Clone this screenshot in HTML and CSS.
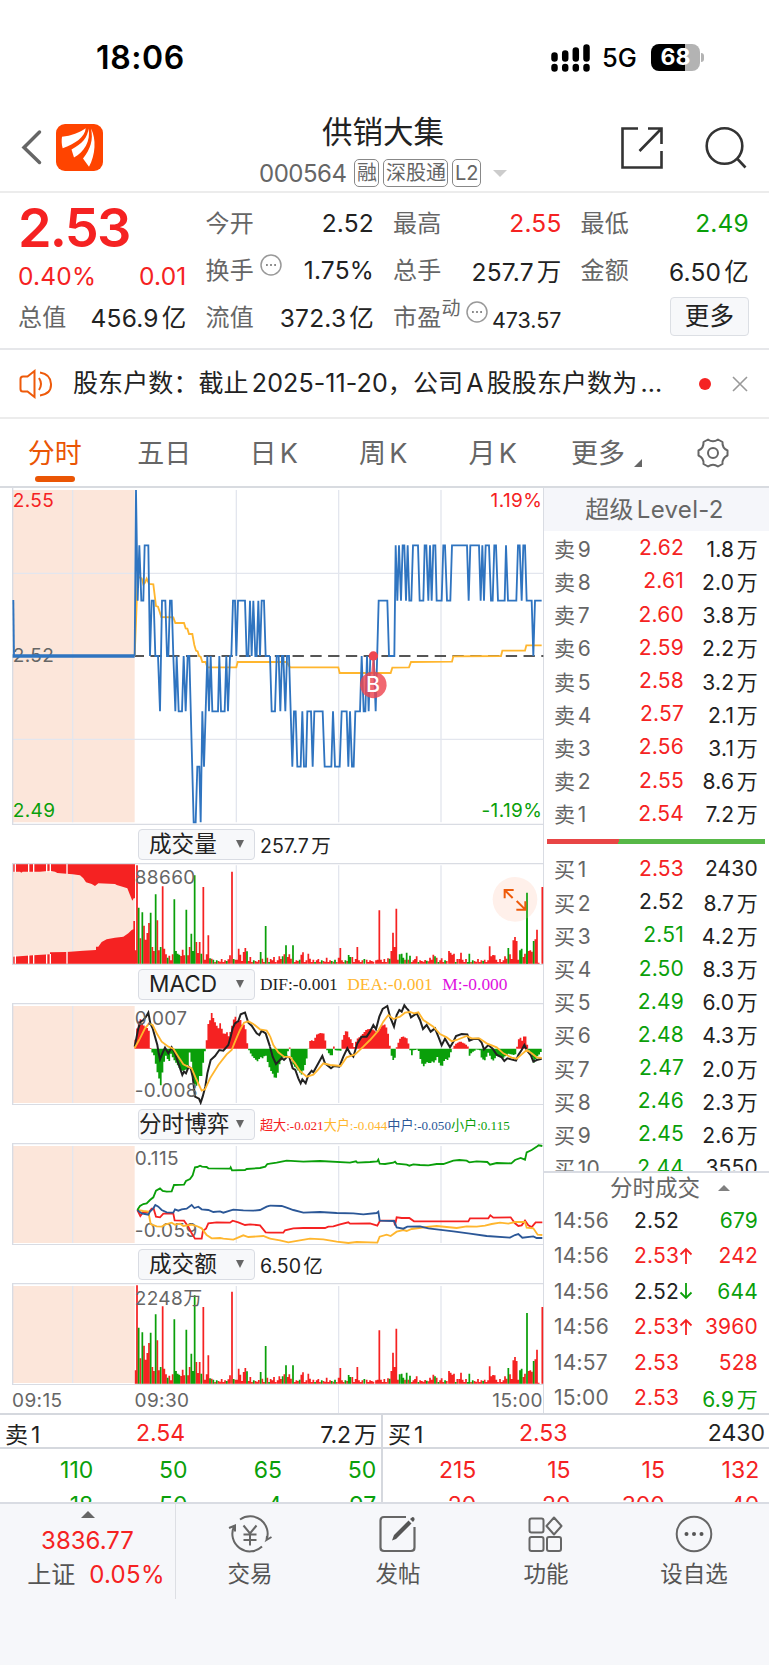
FILE: index.html
```html
<!DOCTYPE html>
<html lang="zh-cn">
<head>
<title>供销大集 000564</title>
<meta charset="utf-8">
<link rel="stylesheet" href="styles.css">
<script src="chart.js" defer></script>
</head>
<body>
<div class="status">
    <span class="time">18:06</span>
    <svg class="signal" width="40" height="28" viewBox="0 0 40 28">
        <path d="M3.5 11.500v3M14.200 9.500v5M24.800 6.500v8M35.500 3.500v11" stroke="#000" stroke-width="6.500" stroke-linecap="round"/>
        <path d="M3.500 23v1.500M14.200 23v1.500M24.800 23v1.500M35.500 23v1.500" stroke="#000" stroke-width="6.500" stroke-linecap="round"/>
    </svg>
    <span class="net">5G</span>
    <span class="battery">68</span><i class="nub"></i>
</div>

<div class="nav">
    <svg class="back" width="22" height="38" viewBox="0 0 22 38"><path d="M18.500 3L3 18.500l15.500 15" fill="none" stroke="#666" stroke-width="3.500" stroke-linecap="round"/></svg>
    <svg class="logo" width="47" height="47" viewBox="0 0 47 47">
        <rect width="47" height="47" rx="9" fill="#ff4400"/>
        <path d="M6 12.700C15 12 24 8.500 29.700 4.300C29 13 19 20 6.700 24.300C5.500 20 5.500 16 6 12.700z" fill="#fff"/>
        <path d="M32.500 4.500C32 13 26 20 15.500 25.500L18 33.500C28 28 35 17 32.500 4.500z" fill="#fff"/>
        <path d="M35 4.500C37.500 16 34.500 25 27 34.500L33 42.700C39.500 31 40.500 15 35 4.500z" fill="#fff"/>
    </svg>
    <div class="title">
        <h1>供销大集</h1>
        <p><span class="code">000564</span><b>融</b><b>深股通</b><b>L2</b><i class="down"></i></p>
    </div>
    <svg class="share" width="44" height="44" viewBox="0 0 44 44" fill="none" stroke="#333" stroke-width="2.600"><path d="M18 2.500H2.500v39h39V25M28 2.500h13.500V18M41 3L19.500 25"/></svg>
    <svg class="search" width="44" height="44" viewBox="0 0 44 44" fill="none" stroke="#333" stroke-width="2.600"><circle cx="20.500" cy="20" r="17.800"/><path d="M33 32.500l8.500 9"/></svg>
</div>

<div class="quote">
    <div class="col first">
        <strong>2.53</strong>
        <p class="chg red"><span>0.40%</span><span>0.01</span></p>
        <p><label>总值</label><span>456.9亿</span></p>
    </div>
    <div class="col">
        <p><label>今开</label><span>2.52</span></p>
        <p><label>换手<svg class="dots" width="22" height="22" viewBox="0 0 22 22"><circle cx="11" cy="11" r="10" fill="none" stroke="#999" stroke-width="1.500"/><path d="M6 11h1.800M10.100 11h1.800M14.200 11h1.800" stroke="#888" stroke-width="2"/></svg></label><span>1.75%</span></p>
        <p><label>流值</label><span>372.3亿</span></p>
    </div>
    <div class="col">
        <p><label>最高</label><span class="red">2.55</span></p>
        <p><label>总手</label><span>257.7万</span></p>
        <p class="pe"><label>市盈<sup>动</sup><svg class="dots" width="22" height="22" viewBox="0 0 22 22"><circle cx="11" cy="11" r="10" fill="none" stroke="#999" stroke-width="1.500"/><path d="M6 11h1.800M10.100 11h1.800M14.200 11h1.800" stroke="#888" stroke-width="2"/></svg></label><span>473.57</span></p>
    </div>
    <div class="col">
        <p><label>最低</label><span class="green">2.49</span></p>
        <p><label>金额</label><span>6.50亿</span></p>
        <p><a class="more">更多</a></p>
    </div>
</div>

<div class="news">
    <svg width="34" height="30" viewBox="0 0 34 30" fill="none" stroke="#ee5a0a" stroke-width="2"><path d="M15.500 2L8.500 7.500H4q-2.500 0-2.500 2.500v10q0 2.500 2.500 2.500h4.500l7 5.500zM20 9q4 6 0 12M21 3.500Q31.500 5 32 15T21 26.500"/></svg>
    <span class="txt">股东户数：截止2025-11-20，公司A股股东户数为...</span>
    <i class="dot"></i>
    <svg width="16" height="16" viewBox="0 0 16 16"><path d="M1 1l14 14M15 1L1 15" stroke="#999" stroke-width="1.600"/></svg>
</div>

<div class="tabs">
    <span class="on">分时</span><span>五日</span><span>日K</span><span>周K</span><span>月K</span><span class="drop">更多</span>
    <svg width="34" height="32" viewBox="0 0 34 32" fill="none" stroke="#666" stroke-width="2"><path d="M12 2.500Q17 6 22 2.500L26.500 5Q26 11 31.500 13.500V18.500Q26 21 26.500 27L22 29.500Q17 26 12 29.500L7.500 27Q8 21 2.500 18.500V13.500Q8 11 7.500 5z" stroke-linejoin="round"/><circle cx="17" cy="16" r="5"/></svg>
</div>

<div class="main">
    <div class="charts">
        <!-- price, 3 units per pixel -->
        <svg class="price" width="544" height="337" viewBox="0 24 1632 1011">
            <rect x="38" y="30" width="366" height="997" fill="#fce6da"/>
            <path class="grid" d="M218 30v997M709 30v997M1016 30v997M1323 30v997M38 280h1592M38 778h1592"/>
            <path class="frame" d="M38 24v1009h1592"/>
            <path d="M404 528h1226" stroke="#555" stroke-width="6" stroke-dasharray="34 19.300" stroke-dashoffset="6"/>
            <text class="mute" x="38" y="547">2.52</text>
            <g class="avg">
                <path d="M404 528L409 400 413 290 425 295 430 313 435 308 440 296 447 312 460 313 468 378 474 380 484 411 520 412 526 429 552 429 557 445 562 446 567 462 577 462 583 495 588 512 593 514 597 528 602 530 607 546 617 546 622 562 709 562 713 546H860L870 562H1015L1019 579H1172L1177 563 1227 562 1233 546 1356 545 1360 529 1503 528 1507 512H1575L1579 496H1625"/>
            </g>
            <g class="now">
                <path d="M40 360L42 528"/><path d="M38 528H404" stroke-width="10"/>
                <path d="M404 528L408 30 413 362 418 196 424 362 430 362 434 196 445 196 450 528 455 362 461 362 466 528 474 528 480 694 486 362 496 362 501 528 505 528 510 362 515 362 520 528 526 694 530 528 536 694 546 694 551 528 557 694 563 528 568 528 581 1027 587 1027 592 860 598 860 602 1027 607 694 612 860 622 528 627 694 632 528 637 694 654 694 658 528 663 694 674 694 679 528 684 694 690 528 694 528 699 362 705 362 709 528 714 362 735 362 740 528 745 528 750 362 755 528 760 362 766 528 770 528 775 362 780 528 785 362 792 362 797 528 810 528"/>
                <path transform="translate(810)" d="M0 528L5 694 15 694 20 528 26 528 31 694 36 528 40 528 46 694 51 528 57 528 67 860 72 694 77 694 82 860 92 860 97 694 102 860 108 860 112 694 123 694 128 860 133 694 158 694 164 860 184 860 189 694 195 860 209 860 215 694 230 694 235 860 240 694 246 860 251 860 256 694 270 694 275 528 281 694 286 694 291 528 296 694 301 528 311 528 317 694 326 362 352 362 357 528 373 528 377 196 382 362 387 196 393 362 398 196 403 196 408 362 413 196 418 362 424 362 429 196 444 196 449 362 460 362 464 196 469 196 475 362 480 196 485 362 490 196 496 196 500 362 515 362 520 196 525 196 531 362 541 362 546 196 591 196 596 362 601 196 627 196 632 362 637 196 642 362 647 196 657 196 663 362 668 362 673 196 678 196 684 362 704 362 708 196 714 362 739 362 744 196 749 196 755 362 760 196 765 196 770 362 785 362 790 528 795 362 815 362"/>
            </g>
            <circle cx="1120" cy="528" r="14" fill="#ee4650"/>
            <path d="M1117 540h6l3 35a40 40 0 1 1-12 0z" fill="#ee4650" opacity=".82"/>
            <text class="mark" x="1120" y="635">B</text>
            <text class="up" x="38" y="81">2.55</text>
            <text class="dn" x="38" y="1012">2.49</text>
            <text class="up" x="1627" y="81" text-anchor="end">1.19%</text>
            <text class="dn" x="1627" y="1012" text-anchor="end">-1.19%</text>
        </svg>

        <div class="bar"><span class="sel">成交量</span><span class="val">257.7万</span></div>
        <svg class="sub" width="544" height="102" viewBox="0 129 1632 306">
            <rect x="38" y="133" width="366" height="299" fill="#fce6da"/>
            <path class="grid" d="M218 136v296M709 136v296M1016 136v296M1323 136v296"/>
            <path fill="#f52222" d="M38 131V155H60L64 158L68 155H120L150 152L165 155L172 159L218 163L240 166L250 175L258 187L275 192L285 198L295 190L345 192L350 195L370 201L382 205L390 225L397 242L401 235H405V131z"/>
            <path fill="#f52222" d="M38 431V410L100 406L150 403V397L200 396L250 392L288 390V380H295L305 366L320 358L345 353L370 350L385 340L395 330L400 328V303H405V431z"/>
            <path d="M46 131v26M86 131v26M101 131v26M140 131v26M151 131v26M201 131v31M46 431v-26M86 431v-26M101 431v-26M140 431v-28M151 431v-29M201 431v-36" stroke="#fff" stroke-width="4"/>
            <g id="vol"></g>
            <path class="frame" d="M38 131v304M36 130.500h1594M36 434h1594"/>
            <text class="mute" x="404" y="193">88660</text>
            <circle cx="1545" cy="238" r="67" fill="#fff0ea"/>
            <path d="M1581 431V218" stroke="#0a9f0a" stroke-width="5"/>
            <path d="M1514 235v-25h27M1514 210l24 24M1576 244v25h-27M1576 269l-26-26" fill="none" stroke="#ee5a0a" stroke-width="6"/>
        </svg>

        <div class="bar"><span class="sel">MACD</span><span class="serif">DIF:-0.001</span><span class="serif y">DEA:-0.001</span><span class="serif m">M:-0.000</span></div>
        <svg class="sub" width="544" height="102" viewBox="0 549 1632 306">
            <rect x="38" y="558" width="366" height="291" fill="#fce6da"/>
            <path class="grid" d="M218 558v291M709 558v291M1016 558v291M1323 558v291"/>
            <g id="macd"></g>
            <path class="frame" d="M38 550v304M36 550.500h1594M36 854h1594"/>
            <g fill="none" stroke="#222" stroke-width="6">
                <path d="M404 680L410 650 415 625 422 605 430 600 438 590 445 578 451 610 458 625 465 650 472 675 476 700 480 718 487 700 495 683 505 700 515 682 525 700 535 730 547 765 552 755 558 760 566 740 572 745 578 770 585 830 597 836 602 848 608 830 616 800 622 760 632 720 645 708 658 690 670 692 685 675 692 650 698 625 705 610 715 603 722 583 735 578 745 608 755 617 770 640 778 645 785 632 797 640 810 680"/>
                <path transform="translate(810)" d="M0 680L8 710 18 732 28 722 35 714 42 720 52 710 58 712 68 745 76 750 85 775 92 790 97 778 107 790 115 765 125 752 130 757 145 730 157 708 165 730 183 745 192 738 208 740 220 710 232 685 240 700 250 710 262 670 275 650 290 650 300 635 310 615 318 628 328 590 338 567 352 558 360 590 372 620 380 585 388 570 395 575 403 556 410 565 415 570 423 592 440 580 450 600 459 627 470 615 482 635 495 625 505 650 515 676 525 656 540 682 550 665 558 648 575 642 592 643 598 662 610 657 625 656 635 668 642 688 655 675 668 686 680 704 695 712 703 723 712 715 738 722 745 705 755 690 763 675 772 693 782 705 790 725 800 720 815 716"/>
            </g>
            <g class="avg">
                <path d="M404 684L420 655 435 625 447 611 458 615 470 640 485 665 505 680 520 686 535 710 550 733 575 745 590 780 605 812 615 808 630 775 655 735 680 703 695 690 705 665 720 630 732 608 745 604 760 612 780 628 800 632 810 648"/>
                <path transform="translate(810)" d="M0 648L10 675 25 697 42 710 60 711 75 730 90 753 110 770 130 764 145 748 160 730 180 735 212 738 230 712 255 703 280 680 300 660 325 632 340 605 355 585 370 597 390 590 405 578 420 576 432 580 445 577 460 600 490 620 510 642 530 652 545 664 560 660 590 648 605 655 628 655 650 670 680 682 700 700 725 713 740 716 755 703 770 690 785 700 800 712 815 714"/>
            </g>
            <text class="mute" x="404" y="614">0.007</text>
            <text class="mute" x="404" y="830">-0.008</text>
        </svg>

        <div class="bar"><span class="sel wide">分时博弈</span><span class="serif s"><i class="red">超大:-0.021</i><i class="y">大户:-0.044</i><i class="b">中户:-0.050</i><i class="green">小户:0.115</i></span></div>
        <svg class="sub" width="544" height="102" viewBox="0 129 1632 306">
            <rect x="38" y="138" width="366" height="291" fill="#fce6da"/>
            <path class="grid" d="M218 138v291M709 138v291M1016 138v291M1323 138v291"/>
            <path class="frame" d="M38 131v304M36 130.500h1594M36 434h1594"/>
            <text class="mute" x="404" y="194">0.115</text>
            <text class="mute" x="404" y="410">-0.059</text>
            <g class="game" stroke="#f52222">
                <path d="M412 330L421 348 430 336 446 338 455 326 461 326 468 350 480 352 490 341 520 341 524 361 552 362 565 380 575 400 585 416 605 416 609 392 618 386 625 370 650 367 690 368 698 362 715 367 735 375 750 373 780 376 797 397 810 398"/>
                <path transform="translate(810)" d="M0 398L40 398 45 391 70 385 100 384 165 384 175 380 190 379 210 373 235 367 240 371 300 370 322 377 330 362 372 362 375 376 380 352 395 354 418 354 432 364 595 364 600 355 655 355 661 346 670 353 722 352 735 370 745 378 755 376 765 362 775 376 785 381 797 367 817 367"/>
            </g>
            <g class="game" stroke="#ffb62e">
                <path d="M412 330L430 333 445 335 452 372 470 379 485 380 500 372 515 368 525 374 540 371 550 378 575 374 590 378 605 385 620 405 635 415 660 414 670 416 700 419 730 406 745 411 790 408 810 416"/>
                <path transform="translate(810)" d="M0 416L30 421 55 427 85 422 120 416 160 418 200 425 235 429 260 426 322 428 329 410 350 404 362 408 380 395 400 390 410 393 425 387 470 381 500 378 560 384 590 379 620 380 645 377 665 372 690 368 715 371 735 366 765 366 770 383 790 385 803 404 817 405"/>
            </g>
            <g class="game" stroke="#2b5797">
                <path d="M412 330L418 335 425 340 435 342 445 344 450 335 460 325 466 315 475 320 485 330 500 337 520 338 525 328 535 332 545 328 560 326 575 315 583 324 595 320 605 328 625 330 640 336 660 334 670 338 690 332 700 329 730 331 760 332 780 330 800 320 810 317"/>
                <path transform="translate(810)" d="M0 317L35 318 50 323 70 330 100 338 150 336 200 339 250 340 280 343 320 339 325 335 329 362 372 363 380 382 400 386 412 380 450 379 475 385 500 388 550 394 600 401 650 408 720 413 735 405 745 402 757 413 790 409 800 414 817 414"/>
            </g>
            <g class="game" stroke="#0a9f0a">
                <path d="M412 330L420 318 430 312 440 310 450 300 460 292 468 272 480 265 488 273 500 275 515 274 522 255 552 254 558 243 570 237 578 226 585 202 592 201 600 197 606 200 620 201 625 205 690 206 692 202 696 211 735 210 740 207 780 204 796 200 802 192 810 191"/>
                <path transform="translate(810)" d="M0 191L20 188 50 182 100 185 150 183 240 188 258 184 262 188 300 186 322 184 325 179 329 191 345 192 370 188 375 185 380 191 410 194 418 197 430 193 450 195 475 196 500 192 520 192 550 182 568 180 590 182 598 187 620 184 652 186 660 194 680 189 724 190 735 180 752 174 765 179 770 157 785 150 802 139 806 136 817 138"/>
            </g>
        </svg>

        <div class="bar"><span class="sel">成交额</span><span class="val">6.50亿</span></div>
        <svg class="sub" width="544" height="102" viewBox="0 129 1632 306">
            <rect x="38" y="138" width="366" height="291" fill="#fce6da"/>
            <path class="grid" d="M218 138v291M709 138v291M1016 138v291M1323 138v291"/>
            <use href="#vol"/>
            <path class="frame" d="M38 131v304M36 130.500h1594M36 434h1594"/>
            <text class="mute" x="404" y="194">2248万</text>
        </svg>
        <div class="axis"><span>09:15</span><span>09:30</span><span>15:00</span></div>
    </div>

    <div class="side">
        <h2>超级Level-2</h2>
        <ul class="book">
            <li><label>卖9</label><b class="red">2.62</b><em>1.8万</em></li>
            <li><label>卖8</label><b class="red">2.61</b><em>2.0万</em></li>
            <li><label>卖7</label><b class="red">2.60</b><em>3.8万</em></li>
            <li><label>卖6</label><b class="red">2.59</b><em>2.2万</em></li>
            <li><label>卖5</label><b class="red">2.58</b><em>3.2万</em></li>
            <li><label>卖4</label><b class="red">2.57</b><em>2.1万</em></li>
            <li><label>卖3</label><b class="red">2.56</b><em>3.1万</em></li>
            <li><label>卖2</label><b class="red">2.55</b><em>8.6万</em></li>
            <li><label>卖1</label><b class="red">2.54</b><em>7.2万</em></li>
        </ul>
        <div class="ratio"></div>
        <ul class="book buy">
            <li><label>买1</label><b class="red">2.53</b><em>2430</em></li>
            <li><label>买2</label><b>2.52</b><em>8.7万</em></li>
            <li><label>买3</label><b class="green">2.51</b><em>4.2万</em></li>
            <li><label>买4</label><b class="green">2.50</b><em>8.3万</em></li>
            <li><label>买5</label><b class="green">2.49</b><em>6.0万</em></li>
            <li><label>买6</label><b class="green">2.48</b><em>4.3万</em></li>
            <li><label>买7</label><b class="green">2.47</b><em>2.0万</em></li>
            <li><label>买8</label><b class="green">2.46</b><em>2.3万</em></li>
            <li><label>买9</label><b class="green">2.45</b><em>2.6万</em></li>
            <li><label>买10</label><b class="green">2.44</b><em>3550</em></li>
        </ul>
        <h3>分时成交<i></i></h3>
        <ul class="deal">
            <li><label>14:56</label><b>2.52</b><em class="green">679</em></li>
            <li><label>14:56</label><b class="red">2.53<svg width="14" height="18" viewBox="0 0 14 18"><path d="M7 17V2M1.500 7.500L7 2l5.500 5.500"/></svg></b><em class="red">242</em></li>
            <li><label>14:56</label><b>2.52<svg class="green" width="14" height="18" viewBox="0 0 14 18"><path d="M7 1v15M1.500 10.500L7 16l5.500-5.500"/></svg></b><em class="green">644</em></li>
            <li><label>14:56</label><b class="red">2.53<svg width="14" height="18" viewBox="0 0 14 18"><path d="M7 17V2M1.500 7.500L7 2l5.500 5.500"/></svg></b><em class="red">3960</em></li>
            <li><label>14:57</label><b class="red">2.53</b><em class="red">528</em></li>
            <li><label>15:00</label><b class="red">2.53</b><em class="green">6.9万</em></li>
        </ul>
    </div>
</div>

<div class="queue">
    <div class="half">
        <p class="top"><label>卖1</label><b class="red">2.54</b><em>7.2万</em></p>
        <div class="nums green"><span>110</span><span>50</span><span>65</span><span>50</span><span>18</span><span>50</span><span>4</span><span>97</span></div>
    </div>
    <div class="half">
        <p class="top"><label>买1</label><b class="red">2.53</b><em>2430</em></p>
        <div class="nums red"><span>215</span><span>15</span><span>15</span><span>132</span><span>20</span><span>20</span><span>300</span><span>40</span></div>
    </div>
</div>

<div class="foot">
    <div class="index"><i></i><p class="red">3836.77</p><p>上证<span class="red">0.05%</span></p></div>
    <div class="item">
        <svg width="44" height="40" viewBox="0 0 44 40" fill="none" stroke="#666" stroke-width="2"><path d="M12 5.500A17.500 17.500 0 0 1 38.500 26l5-3M38.500 26l.5-4M34 32.500A17.500 17.500 0 0 1 6 12.500M1 14l6-2.500v6M15.500 11.500l6.500 8 6.500-8M22 19.500v12M15.500 20.500h13M15.500 26h13"/></svg>交易
    </div>
    <div class="item">
        <svg width="44" height="40" viewBox="0 0 44 40"><path d="M30 3H8q-3.500 0-3.500 3.500v27Q4.500 37 8 37h27q3.500 0 3.500-3.500V13" fill="none" stroke="#666" stroke-width="2.200"/><path d="M16 26.500l2-5.500L32.500 6.500l3 3L20 25zM34 5l2.500-2q2.500 0 2 3L37 8z" fill="#555"/></svg>发帖
    </div>
    <div class="item">
        <svg width="44" height="40" viewBox="0 0 44 40" fill="none" stroke="#666" stroke-width="2"><rect x="5.500" y="4.500" width="14" height="14" rx="2"/><rect x="5.500" y="23" width="14" height="14" rx="2"/><rect x="23" y="23" width="14" height="14" rx="2"/><path d="M30 3.500l7.500 8.500-7.500 8.500-7.500-8.500z" stroke-linejoin="round"/></svg>功能
    </div>
    <div class="item">
        <svg width="44" height="40" viewBox="0 0 44 40"><circle cx="22" cy="20" r="17.300" fill="none" stroke="#666" stroke-width="2"/><g fill="#555"><circle cx="14.500" cy="20" r="2"/><circle cx="22" cy="20" r="2"/><circle cx="29.500" cy="20" r="2"/></g></svg>设自选
    </div>
</div>
</body>
</html>
```
FILE: styles.css
```css
body,ul,h1,h2,h3,p{margin: 0;padding: 0;}
li{list-style: none;}
i,em{font-style: normal;}
h1,h2,h3,b{font-weight: 400;}
svg{display: block;flex: none;}
body{width: 769px;height: 1665px;overflow: hidden;background: #FFF;color: #222;font-family: Inter,"Noto Sans CJK SC",sans-serif;text-autospace: normal;}
.red{color: #f52222;}
.green{color: #0a9f0a;}
.y{color: #ffb62e;}
.b{color: #2b5797;}
.m{color: #e010e0;}

/* status bar */
.status{height: 115px;box-sizing: border-box;display: flex;align-items: center;padding-left: 96px;color: #000;}
.status .time{font-size: 32px;font-weight: 600;width: 455px;letter-spacing: .6px;}
.status .net{font-size: 25.500px;font-weight: 500;margin-left: 11px;width: 49px;}
.battery{width: 49px;height: 27px;border-radius: 8px;background: linear-gradient(90deg,#000 70%,#b3b3b3 70%);color: #FFF;font-size: 23px;font-weight: 700;line-height: 27px;text-align: center;}
.nub{width: 3px;height: 9px;margin-left: 1px;border-radius: 0 3px 3px 0;background: #b3b3b3;}

/* title bar */
.nav{height: 76px;border-bottom: 2px solid #ececec;display: flex;}
.nav .back{margin: 14px 0 0 21px;}
.nav .logo{margin: 9px 0 0 13px;}
.title{width: 517px;box-sizing: border-box;text-align: center;padding-left: 43px;}
.title h1{font-size: 30.5px;line-height: 34px;}
.title p{display: flex;justify-content: center;align-items: center;margin-top: 9px;height: 30px;color: #666;}
.title .code{font-size: 24px;margin-right: 4px;letter-spacing: -.5px;}
.title b{border: 1.5px solid #888;border-radius: 5px;font-size: 20px;line-height: 26px;padding: 0 1.500px;margin-left: 4px;}
.down{border: 7px solid transparent;border-top-color: #ccc;border-bottom: 0;margin-left: 12px;}
.nav .share{margin: 11px 0 0 0;}
.nav .search{margin: 11px 0 0 40px;}

/* quote */
.quote{display: flex;gap: 19px;padding: 7px 18px 0 18px;height: 148px;border-bottom: 2px solid #e6e7ea;font-size: 24.5px;}
.col{width: 168.500px;flex: none;}
.col p{display: flex;justify-content: space-between;align-items: center;height: 46.7px;white-space: nowrap;letter-spacing: .2px;}
.col label{color: #666;font-size: 24px;display: flex;margin-top: -3px;}
.first strong{display: block;font-size: 54px;font-weight: 600;line-height: 57px;height: 57px;margin-top: -1px;color: #f52222;letter-spacing: -1.800px;}
.first .chg{height: 36px;padding-top: 2px;margin-bottom: -.5px;}
.dots{margin: 3px 0 0 6px;}
.pe sup{font-size: 19px;line-height: 22px;}
.pe .dots{margin-left: 5px;}
.col .pe span{font-size: 21.500px;padding-top: 6px;letter-spacing: 0;}
.more{margin-left: auto;width: 77px;height: 37px;line-height: 36px;border: 1px solid #dcdfe4;border-radius: 4px;background: #f7f8fa;text-align: center;}

.news{height: 67px;border-bottom: 2px solid #ececec;display: flex;align-items: center;padding-left: 19px;}
.news .txt{margin-left: 20px;font-size: 25px;width: 626px;white-space: nowrap;letter-spacing: .1px;line-height: 34px;padding-bottom: 2px;}
.news .dot{width: 12px;height: 12px;border-radius: 50%;background: #f52222;margin-right: 21px;}

.tabs{height: 67px;border-bottom: 2px solid #d8dbe0;display: flex;align-items: center;font-size: 27px;color: #666;}
.tabs span{width: 109.500px;height: 67px;line-height: 69px;text-align: center;position: relative;}
.tabs .on{color: #ea5504;}
.tabs .on:after{content: "";position: absolute;left: 35px;bottom: 4px;width: 40px;height: 6px;border-radius: 3px;background: #ea5504;}
.tabs .drop{width: 101px;}
.tabs .drop:after{content: "";position: absolute;right: 7px;bottom: 19px;border-left: 8px solid transparent;border-bottom: 8px solid #666;}
.tabs svg{margin-left: 47px;}

/* charts */
.main{display: flex;height: 927px;box-sizing: border-box;border-bottom: 2px solid #d5d8de;}
.charts{width: 544px;flex: none;border-right: 1px solid #d9dce3;box-sizing: border-box;}
.charts text{font-size: 57px;letter-spacing: 1.200px;text-autospace: no-autospace;}
.charts .mark{font-size: 64px;font-weight: 500;fill: #FFF;text-anchor: middle;}
.mute{fill: #666;}
.up{fill: #f52222;}
.dn{fill: #0a9f0a;}
.grid{fill: none;stroke: #e3e6ee;stroke-width: 4;}
.frame{fill: none;stroke: #d9dce3;stroke-width: 4;}
.now{fill: none;stroke: #2f74c0;stroke-width: 5.500;}
.avg{fill: none;stroke: #ffb62e;stroke-width: 5.500;}
.game{fill: none;stroke-width: 5.500;}
.bar{height: 38px;display: flex;align-items: center;padding-left: 138px;white-space: nowrap;}
.sel{box-sizing: border-box;width: 117px;height: 31px;line-height: 28px;border: 1px solid #d9dce3;border-radius: 4px;background: #f7f8fa;font-size: 22.600px;padding-left: 10px;margin-right: 5px;position: relative;}
.sel:after{content: "";position: absolute;right: 10px;top: 10px;border: 4.500px solid transparent;border-top: 8px solid #666;border-bottom: 0;}
.sel.wide{padding-left: 0;}
.val{font-size: 19.500px;}
.serif{font-family: "Liberation Serif","Noto Sans CJK SC",serif;font-size: 17.400px;margin-right: 9.500px;}
.serif.s{font-size: 13.100px;text-autospace: no-autospace;}
.axis{height: 28px;line-height: 32px;display: flex;font-size: 19px;color: #666;padding-left: 12px;letter-spacing: .4px;background: linear-gradient(#e3e6ee,#e3e6ee) 338px 0/1px 100% no-repeat;}
.axis span:first-child{width: 122.500px;}
.axis span:last-child{margin-left: auto;}

/* order book */
.side{flex: 1;width: 225px;}
.side h2{height: 43.200px;line-height: 43px;background: #f5f6fa;color: #666;font-size: 24px;text-align: center;padding-right: 4px;letter-spacing: .3px;}
.side li{display: flex;align-items: center;height: 33.200px;padding: 0 11px 0 10px;font-size: 21px;letter-spacing: .2px;}
.side label{color: #666;width: 64px;}
.side b{width: 66px;text-align: right;}
.side em{flex: 1;text-align: right;}
.ratio{height: 5px;margin: 9.500px 4px 7.500px 3px;background: linear-gradient(115deg,#e84545 33%,#57b847 33%);}
.buy{height: 319px;overflow: hidden;border-bottom: 2px solid #d9dce3;}
.side h3{height: 30px;line-height: 32px;color: #666;font-size: 22.500px;display: flex;align-items: center;padding-left: 66px;}
.side h3 i{border: 6px solid transparent;border-bottom-color: #808080;border-top: 0;margin-left: 18px;}
.deal{height: 209px;}
.side .deal li{height: 35.400px;}
.deal label{width: 80px;}
.deal b{display: flex;align-items: center;text-align: left;}
.deal b svg{fill: none;stroke: currentColor;stroke-width: 1.800;}

/* queue */
.queue{display: flex;height: 87px;overflow: hidden;}
.half{width: 383px;flex: none;box-sizing: border-box;border-right: 2px solid #d5d8de;}
.half+.half{width: 386px;border: 0;}
.top{display: flex;align-items: center;height: 34px;border-bottom: 2px solid #d5d8de;font-size: 23px;padding: 4px 4px 0 5px;box-sizing: border-box;}
.top label{width: 110px;}
.top b{flex: 1;padding-left: 21px;}
.nums{display: grid;grid-template-columns: 94.300px 94.300px 94.300px 94.300px;font-size: 23px;padding: 3px 0 0;}
.nums span{text-align: right;line-height: 36px;height: 35px;padding-right: 1px;}

.foot{height: 164px;border-top: 2px solid #d9dce3;background: #f6f7fa;display: flex;color: #555;box-sizing: border-box;}
.index{width: 175px;height: 95px;border-right: 1px solid #dddfe4;text-align: center;font-size: 24px;display: flex;flex-direction: column;align-items: center;}
.index i{border: 7px solid transparent;border-bottom-color: #666;border-top: 0;margin-top: 7px;}
.index p{line-height: 34px;margin-top: 6px;white-space: nowrap;}
.index p:last-child{margin-top: 0;padding-left: 17px;}
.index span{margin-left: 11px;letter-spacing: .3px;}
.item{width: 148px;display: flex;flex-direction: column;align-items: center;font-size: 22.500px;line-height: 34px;padding-top: 10px;gap: 3px;}
```
FILE: chart.js
```js
// x position of a minute and its height, minus = green
var vol = [407,40,411,295,416,-168,421,76,427,-154,432,114,437,72,442,92,447,122,452,-153,457,50,462,38,467,-208,472,130,477,40,482,-50,488,232,493,45,498,28,503,-18,508,24,513,10,518,28,523,-193,528,-38,533,-30,538,-27,543,23,548,42,553,25,559,-162,564,25,569,50,574,-90,579,-38,584,-265,589,65,594,32,599,65,604,-30,610,230,615,12,620,28,625,85,630,-16,635,15,640,-12,665,14,685,13,690,25,696,276,701,-14,706,12,711,12,716,45,721,27,726,8,731,35,736,47,741,-37,746,8,751,20,782,-35,787,15,797,-113,802,18,812,14,817,10,822,20,
    833,10,838,22,843,14,848,-22,853,28,858,-55,863,20,868,28,873,15,879,-55,894,8,899,-12,904,27,909,34,925,30,930,15,940,12,955,14,980,18,1005,-12,1016,18,1021,47,1026,10,1046,-26,1051,-20,1057,20,1067,14,1072,50,1077,10,1093,-14,1100,12,1128,10,1133,12,1138,160,1143,12,1153,14,1164,16,1169,-15,1174,38,1179,93,1184,50,1189,165,1194,12,1199,-28,1205,-30,1210,-18,1215,12,1220,-33,1225,12,1230,-24,1245,14,1250,22,1290,18,1295,12,1300,27,1305,-22,1310,18,1325,16,1347,38,1352,33,1357,27,1362,30,1372,14,1378,14,1383,33,1388,12,1398,14,1408,-30,1434,14,1454,12,1469,52,1474,22,1479,26,1484,25,1489,12,1500,14,1515,22,1520,15,1525,-47,1530,28,1535,14,1540,70,1545,80,1550,68,1555,12,1560,-40,1565,-45,1570,20,1575,30,1581,-212,1586,38,1591,40,1596,36,1601,-68,1606,73,1611,102,1616,3,1621,0,1627,230];

// macd key heights, minutes between are filled in
var macd = [404,0,407,40,414,75,420,92,426,75,436,65,445,60,449,45,452,-1,456,-10,462,-20,467,-45,472,-70,477,-88,482,-112,487,-75,490,-50,497,-20,502,-30,508,-37,513,-15,520,-30,530,-45,545,-68,560,-62,565,-45,568,-8,573,-28,578,-85,585,-110,592,-112,600,-80,605,-82,611,-30,614,-10,617,0,620,27,625,75,630,85,634,110,640,92,647,75,655,60,660,78,667,55,673,40,680,52,685,35,692,52,700,85,706,97,712,75,720,90,728,68,735,75,740,30,744,2,747,-5,755,-20,762,-28,772,-38,782,-25,790,-30,796,-14,803,-40,810,-62,818,-75,826,-92,832,-80,840,-40,850,-25,860,-22,866,-1,869,5,873,-20,880,-50,890,-60,905,-78,912,-60,920,-30,925,-2,928,15,933,32,938,18,950,42,960,47,972,45,976,25,980,-3,990,-20,997,-20,1001,8,1006,-5,1022,-6,1025,22,1030,35,1035,50,1041,56,1047,35,1055,25,1062,3,1065,12,1070,28,1085,40,1100,58,1115,60,1130,50,1145,68,1155,73,1163,55,1170,5,1174,-20,1183,-42,1187,-8,1190,5,1200,30,1208,38,1222,30,1228,5,1235,-22,1240,-5,1255,-2,1262,-35,1270,-55,1280,-40,1290,-45,1297,-38,1303,-42,1312,-25,1318,-45,1326,-55,1335,-30,1345,-35,1352,-12,1360,5,1368,15,1380,22,1395,15,1405,5,1408,-22,1415,-12,1430,-2,1440,-5,1445,-30,1455,-35,1465,-12,1478,-38,1490,-22,1500,-25,1510,-28,1525,-15,1545,-20,1550,-5,1553,20,1560,38,1565,20,1575,45,1580,20,1585,-2,1595,-20,1602,-42,1610,-25,1620,-15,1625,-5];

function draw(id, bars, base){
    var r = '', g = '';
    for(var i=0;i<bars.length;i++){
        var s = 'M' + bars[i][0].toFixed(1) + ' ' + base + 'v' + (-bars[i][1]).toFixed(1);
        if(bars[i][2]) g += s; else r += s;
    }
    document.getElementById(id).innerHTML = '<path d="' + r + '" stroke="#f52222" stroke-width="5.2"/><path d="' + g + '" stroke="#0a9f0a" stroke-width="5.2"/>';
}

var bars = [];
for(var i=0;i<vol.length;i+=2){
    // quiet minutes
    var last = i ? vol[i-2] : 404;
    for(var x=last+5.09,n=0;x<vol[i]-3;x+=5.09,n++){
        bars.push([x, 5 + (i*7+n*5)%7, (i+n*3)%5==2]);
    }
    bars.push([vol[i], Math.abs(vol[i+1]), vol[i+1]<0]);
}
draw('vol', bars, 431);

bars = [];
for(var x=406,k=0;x<1625;x+=5.09){
    while(macd[k+2]<x) k+=2;
    var t = (x-macd[k])/(macd[k+2]-macd[k]);
    var h = macd[k+1] + (macd[k+3]-macd[k+1])*t;
    bars.push([x, h, h<0]);
}
draw('macd', bars, 686);
```
